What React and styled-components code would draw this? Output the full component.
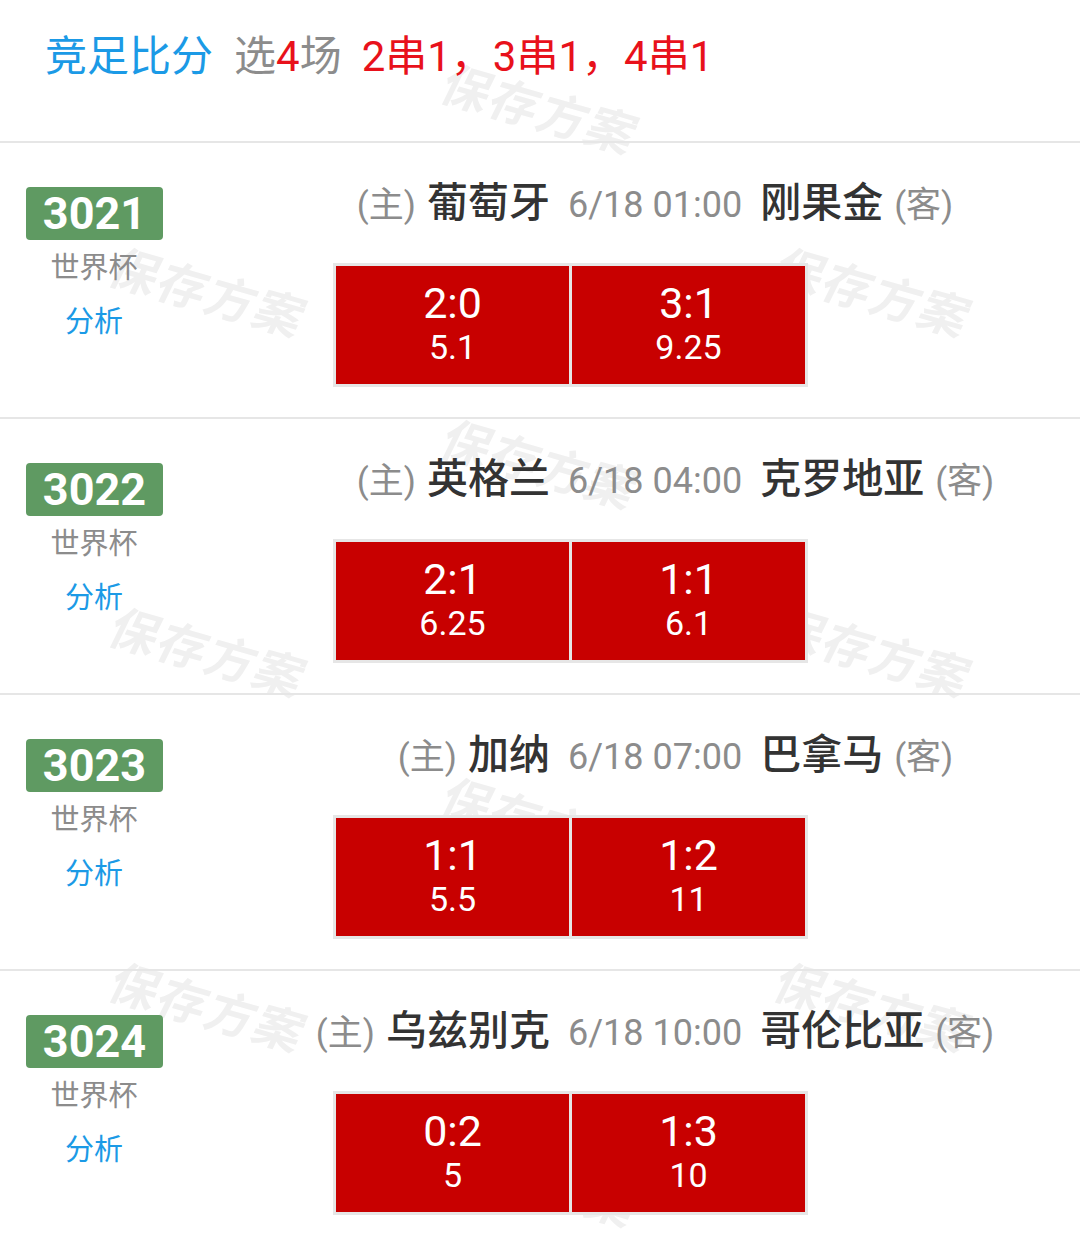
import React from "react";
import styled, { createGlobalStyle } from "styled-components";

const GlobalStyle = createGlobalStyle`
  body {
    margin: 0;
    background: #fff;
    font-family: Roboto, "Noto Sans CJK SC", "Noto Sans", sans-serif;
  }
`;

const matches = [
  {
    no: "3021",
    home: "葡萄牙",
    away: "刚果金",
    time: "6/18 01:00",
    picks: [
      { score: "2:0", odds: "5.1" },
      { score: "3:1", odds: "9.25" },
    ],
  },
  {
    no: "3022",
    home: "英格兰",
    away: "克罗地亚",
    time: "6/18 04:00",
    picks: [
      { score: "2:1", odds: "6.25" },
      { score: "1:1", odds: "6.1" },
    ],
  },
  {
    no: "3023",
    home: "加纳",
    away: "巴拿马",
    time: "6/18 07:00",
    picks: [
      { score: "1:1", odds: "5.5" },
      { score: "1:2", odds: "11" },
    ],
  },
  {
    no: "3024",
    home: "乌兹别克",
    away: "哥伦比亚",
    time: "6/18 10:00",
    picks: [
      { score: "0:2", odds: "5" },
      { score: "1:3", odds: "10" },
    ],
  },
];

// watermark centres, tiled over the page
const marks = [
  [542, 107],
  [210, 290],
  [875, 290],
  [542, 462],
  [210, 650],
  [875, 650],
  [542, 820],
  [210, 1005],
  [875, 1005],
  [542, 1180],
];

function App() {
  return (
    <>
      <GlobalStyle />
      <Page>
        <WatermarkLayer>
          {marks.map(([x, y], i) => (
            <Watermark key={i} style={{ left: x, top: y }}>
              保存方案
            </Watermark>
          ))}
        </WatermarkLayer>

        <Header>
          <Title>竞足比分</Title>
          <Pick>
            选<Red>4</Red>场
          </Pick>
          <Red>2串1，3串1，4串1</Red>
        </Header>

        {matches.map((m) => (
          <Row key={m.no}>
            <Left>
              <Badge>{m.no}</Badge>
              <League>世界杯</League>
              <Analyze>分析</Analyze>
            </Left>
            <Right>
              <MatchLine>
                <Side $align="end">
                  <Tag>(主)</Tag>
                  <Team>{m.home}</Team>
                </Side>
                <Time>{m.time}</Time>
                <Side $align="start">
                  <Team>{m.away}</Team>
                  <Tag>(客)</Tag>
                </Side>
              </MatchLine>
              <OddsBox>
                {m.picks.map((p) => (
                  <Cell key={p.score}>
                    <Score>{p.score}</Score>
                    <Odds>{p.odds}</Odds>
                  </Cell>
                ))}
              </OddsBox>
            </Right>
          </Row>
        ))}
      </Page>
    </>
  );
}

export default App;

const Page = styled.div`
  position: relative;
  width: 1080px;
  min-height: 1240px;
  overflow: hidden;
  background: #fff;
`;

const WatermarkLayer = styled.div`
  position: absolute;
  inset: 0;
  pointer-events: none;
  z-index: 0;
`;

const Watermark = styled.div`
  position: absolute;
  transform: translate(-50%, -50%) rotate(16deg) skewX(-10deg);
  font-family: "Noto Sans CJK SC", sans-serif;
  font-size: 48px;
  font-weight: 700;
  color: #f0f0f0;
  white-space: nowrap;
  letter-spacing: 2px;
`;

const Header = styled.div`
  position: relative;
  z-index: 1;
  height: 143px;
  box-sizing: border-box;
  padding: 32px 0 0 45px;
  border-bottom: 2px solid #e6e6e6;
  display: flex;
  align-items: flex-start;
  font-size: 42px;
  line-height: 50px;
`;

const Title = styled.span`
  color: #1b9ae6;
  margin-right: 21px;
`;

const Pick = styled.span`
  color: #8c8c8c;
  margin-right: 20px;
`;

const Red = styled.span`
  color: #e8111b;
`;

const Row = styled.div`
  position: relative;
  z-index: 1;
  height: 276px;
  box-sizing: border-box;
  border-bottom: 2px solid #e6e6e6;
  display: flex;
`;

const Left = styled.div`
  width: 190px;
  display: flex;
  flex-direction: column;
  align-items: center;
  padding-top: 44px;
  box-sizing: border-box;
`;

const Badge = styled.div`
  width: 137px;
  height: 53px;
  margin-left: -1px;
  background: #5f9a62;
  border-radius: 4px;
  color: #fff;
  font-family: Roboto, sans-serif;
  font-weight: 700;
  font-size: 45px;
  line-height: 53px;
  text-align: center;
`;

const League = styled.div`
  margin-top: 8px;
  margin-left: -2px;
  font-size: 29px;
  line-height: 40px;
  color: #8c8c8c;
`;

const Analyze = styled.div`
  margin-top: 14px;
  margin-left: -2px;
  font-size: 29px;
  line-height: 40px;
  color: #1b9ae6;
`;

const Right = styled.div`
  flex: 1;
  display: flex;
  flex-direction: column;
  padding-top: 35px;
`;

const MatchLine = styled.div`
  display: grid;
  grid-template-columns: 360px auto 1fr;
  column-gap: 18px;
  align-items: baseline;
  height: 50px;
  line-height: 50px;
`;

const Side = styled.div`
  display: flex;
  align-items: baseline;
  justify-content: flex-${(p) => p.$align};
  gap: 11px;
`;

const Tag = styled.span`
  font-size: 35px;
  color: #8c8c8c;
`;

const Team = styled.span`
  font-size: 41px;
  font-weight: 500;
  color: #333;
`;

const Time = styled.span`
  font-size: 36px;
  color: #8c8c8c;
`;

const OddsBox = styled.div`
  margin: 35px 0 0 143px;
  width: 475px;
  box-sizing: border-box;
  padding: 3px;
  background: #e6e6e6;
  display: flex;
  gap: 3px;
`;

const Cell = styled.div`
  width: 233px;
  height: 118px;
  background: #c80000;
  color: #fff;
  display: flex;
  flex-direction: column;
  align-items: center;
  justify-content: center;
  padding-bottom: 2px;
  box-sizing: border-box;
  font-family: Roboto, sans-serif;
`;

const Score = styled.div`
  font-size: 43px;
  line-height: 46px;
`;

const Odds = styled.div`
  font-size: 34px;
  line-height: 42px;
`;
